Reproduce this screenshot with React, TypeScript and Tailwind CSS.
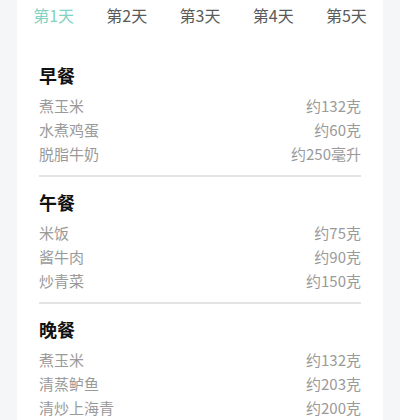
import React from "react";

const days = ["第1天", "第2天", "第3天", "第4天", "第5天"];

const meals = [
  {
    name: "早餐",
    items: [
      ["煮玉米", "约132克"],
      ["水煮鸡蛋", "约60克"],
      ["脱脂牛奶", "约250毫升"],
    ],
  },
  {
    name: "午餐",
    items: [
      ["米饭", "约75克"],
      ["酱牛肉", "约90克"],
      ["炒青菜", "约150克"],
    ],
  },
  {
    name: "晚餐",
    items: [
      ["煮玉米", "约132克"],
      ["清蒸鲈鱼", "约203克"],
      ["清炒上海青", "约200克"],
    ],
  },
];

export default function App() {
  return (
    <div
      className="min-h-[420px] h-[420px] overflow-hidden bg-[#f5f6f8] px-[17px]"
      style={{ fontFamily: '"Noto Sans CJK SC", "Noto Sans", sans-serif' }}
    >
      <div className="bg-white h-full">
        <div className="flex h-[30px] items-center">
          {days.map((d, i) => (
            <div
              key={d}
              className={`flex-1 text-center text-[16px] leading-[30px] ${
                i === 0 ? "text-[#80d2c2]" : "text-[#5a5a5a]"
              }`}
            >
              {d}
            </div>
          ))}
        </div>
        <div className="px-[22px] pt-[20px]">
          {meals.map((m, idx) => (
            <div key={m.name}>
              {idx > 0 && <div className="h-[2px] bg-[#e3e3e3]" />}
              <div className="pt-[12px] pb-[9px]">
                <div className="text-[18px] leading-[26px] font-bold text-[#111111]">
                  {m.name}
                </div>
                <div className="mt-[6px]">
                  {m.items.map(([a, b]) => (
                    <div
                      key={a}
                      className="flex justify-between text-[15px] leading-[24px] text-[#9a9a9a]"
                    >
                      <span>{a}</span>
                      <span>{b}</span>
                    </div>
                  ))}
                </div>
              </div>
            </div>
          ))}
        </div>
      </div>
    </div>
  );
}
